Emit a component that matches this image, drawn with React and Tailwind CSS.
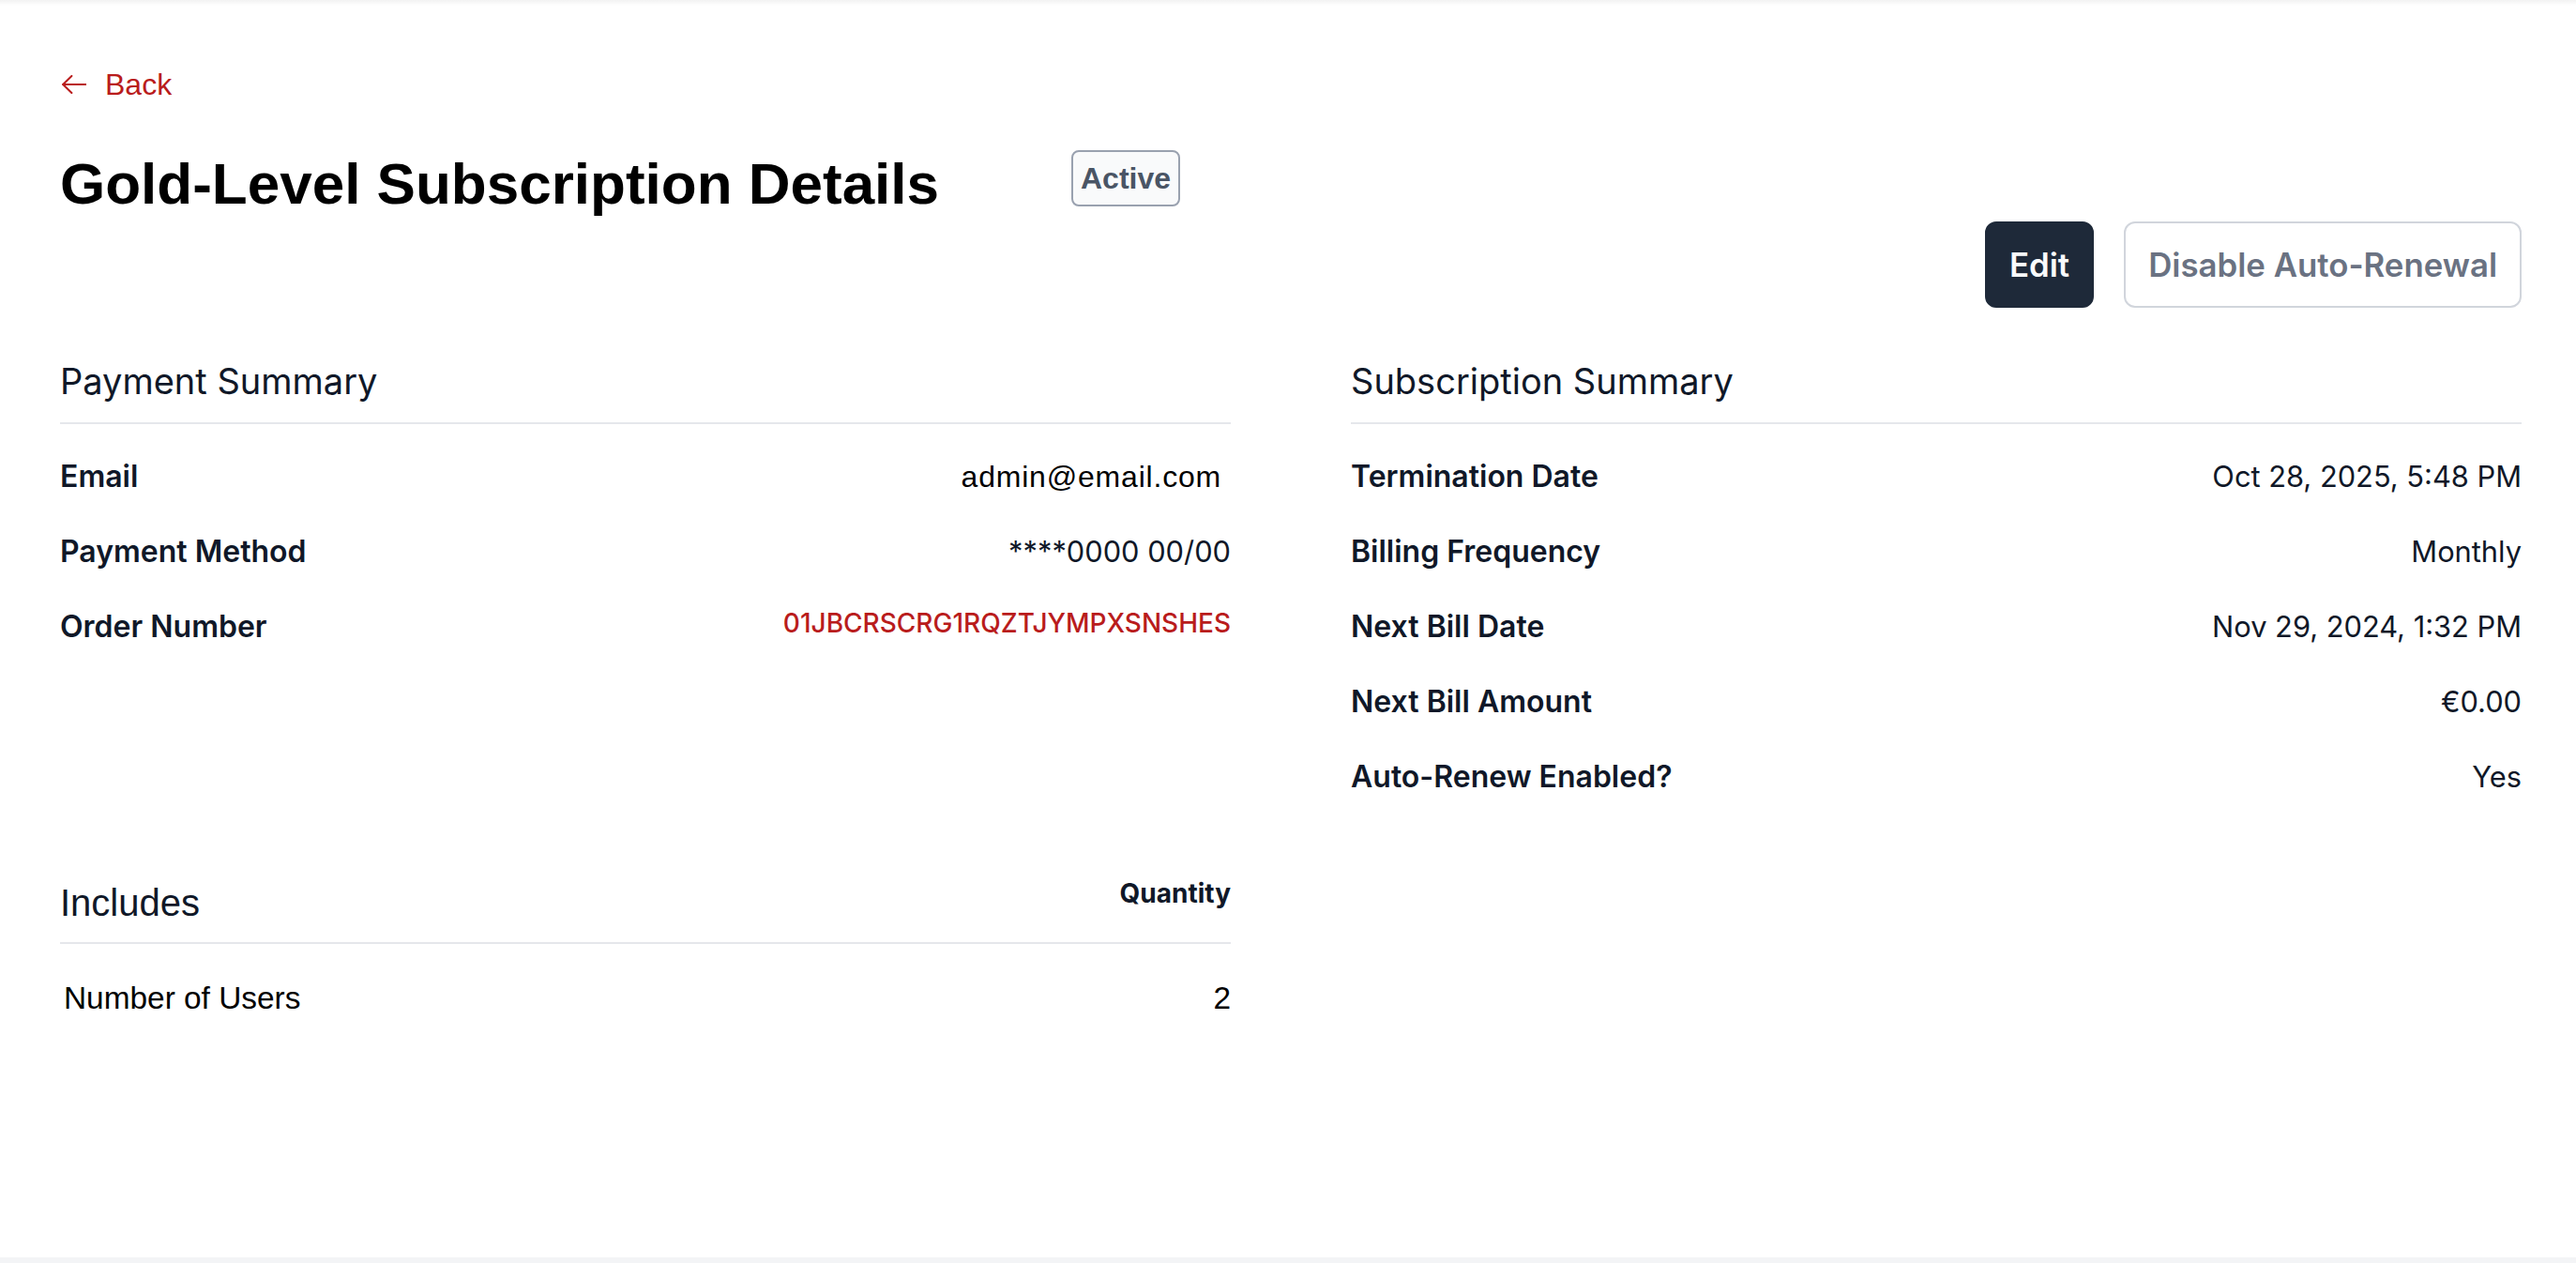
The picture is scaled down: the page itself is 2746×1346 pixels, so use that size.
import React from "react";

const paymentRows = [
  { label: "Email", value: "admin@email.com", kind: "email" },
  { label: "Payment Method", value: "****0000 00/00" },
  { label: "Order Number", value: "01JBCRSCRG1RQZTJYMPXSNSHES", kind: "order" },
];

const subscriptionRows = [
  { label: "Termination Date", value: "Oct 28, 2025, 5:48 PM" },
  { label: "Billing Frequency", value: "Monthly" },
  { label: "Next Bill Date", value: "Nov 29, 2024, 1:32 PM" },
  { label: "Next Bill Amount", value: "€0.00" },
  { label: "Auto-Renew Enabled?", value: "Yes" },
];

const includes = [{ name: "Number of Users", quantity: 2 }];

const ArrowLeft = () => (
  <svg viewBox="0 0 14 10" className="w-[14px] h-[10px]" fill="none" stroke="currentColor" strokeWidth="1" strokeLinecap="round" strokeLinejoin="round">
    <path d="M14 5H1.6" />
    <path d="M6.2 0.5 1.6 5l4.6 4.5" />
  </svg>
);

const SummaryRow = ({ label, value, kind }) => {
  let valueClass = "text-[15.4px] text-gray-900";
  if (kind === "email") valueClass = "font-['Liberation_Sans',Arial,sans-serif] text-base tracking-[0.4px] text-black pr-[5px]";
  if (kind === "order") valueClass = "self-start text-sm font-medium text-[#b91c1c]";
  return (
    <div className="flex items-center justify-between h-6">
      <span className="text-base font-semibold text-gray-900">{label}</span>
      <span className={valueClass}>{value}</span>
    </div>
  );
};

const Section = ({ title, rows }) => (
  <div>
    <h2 className="text-[19px] leading-7 text-gray-900 pb-2 border-b border-gray-200">{title}</h2>
    <div className="flex flex-col gap-4 mt-4">
      {rows.map((row) => (
        <SummaryRow key={row.label} {...row} />
      ))}
    </div>
  </div>
);

const App = () => {
  return (
    <div className="[zoom:2] h-[673px] flex flex-col bg-gray-100 font-[Inter,sans-serif]">
      <main className="flex-1 bg-white">
        <div className="h-[3px] bg-linear-to-b from-black/5 to-transparent" />
        <div className="pt-[30px] pl-8 pr-[29px]">
          <a href="#" className="flex items-center gap-2.5 h-6 text-[#b91c1c] font-['Liberation_Sans',Arial,sans-serif] text-base w-fit">
            <ArrowLeft />
            <span>Back</span>
          </a>

          <div className="flex items-start mt-[21px]">
            <div className="w-[539px] shrink-0">
              <h1 className="font-['Liberation_Sans',Arial,sans-serif] font-bold text-[31px] leading-10 text-black">
                Gold-Level Subscription Details
              </h1>
            </div>
            <span className="mt-0.5 px-1 py-0.5 leading-6 border border-gray-400 rounded-sm bg-gray-50 text-gray-600 font-['Liberation_Sans',Arial,sans-serif] font-bold text-base">
              Active
            </span>
          </div>

          <div className="flex justify-end gap-4">
            <button className="px-3 py-2 text-[17.4px] leading-7 font-semibold text-gray-50 bg-gray-800 border border-gray-800 rounded-md">
              Edit
            </button>
            <button className="px-3 py-2 text-[17.4px] leading-7 font-semibold text-gray-500 bg-white border border-gray-300 rounded-md">
              Disable Auto-Renewal
            </button>
          </div>

          <div className="grid grid-cols-2 gap-x-16 gap-y-[41px] mt-[25px]">
            <Section title="Payment Summary" rows={paymentRows} />
            <Section title="Subscription Summary" rows={subscriptionRows} />

            <div>
              <div className="flex items-start justify-between pb-[7px] border-b border-gray-200">
                <h2 className="font-['Liberation_Sans',Arial,sans-serif] text-xl leading-7 text-gray-900">Includes</h2>
                <span className="-mt-px text-sm font-bold text-gray-900">Quantity</span>
              </div>
              {includes.map((item) => (
                <div key={item.name} className="flex items-center justify-between mt-[17px] pl-0.5 h-6 font-['Liberation_Sans',Arial,sans-serif] text-[16.7px] text-black">
                  <span>{item.name}</span>
                  <span>{item.quantity}</span>
                </div>
              ))}
            </div>
          </div>
        </div>
      </main>
      <div className="h-[3px] bg-gray-100" />
    </div>
  );
};

export default App;
